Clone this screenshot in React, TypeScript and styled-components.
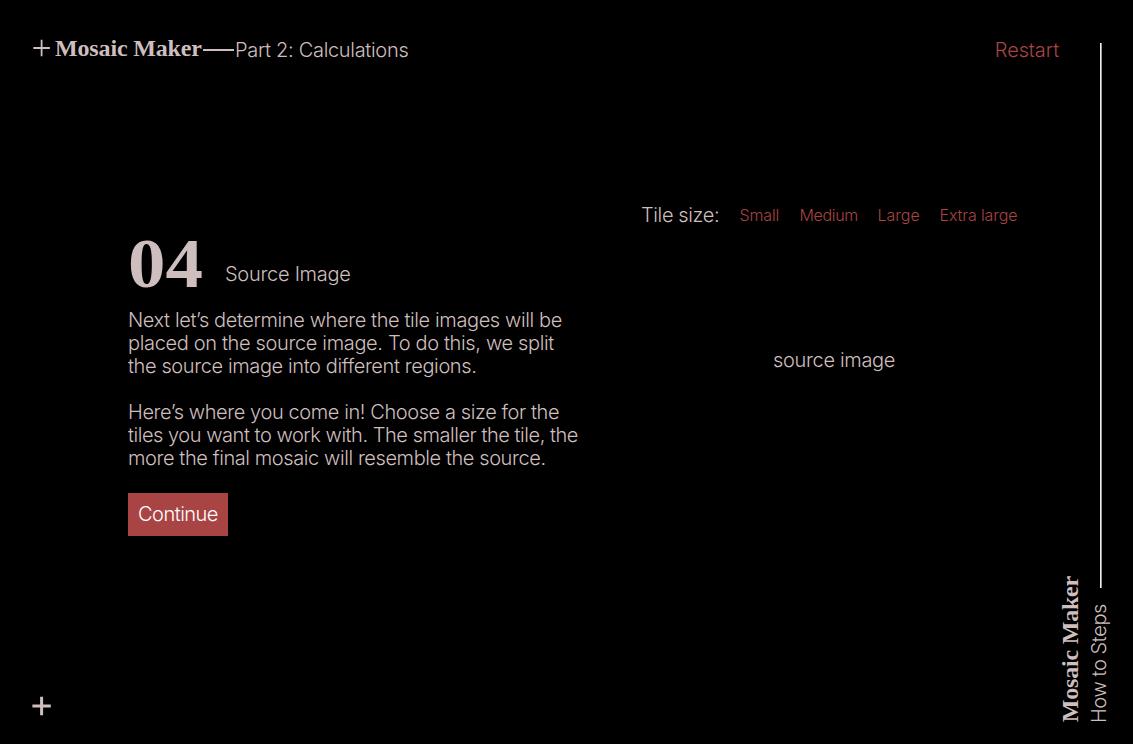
import React from "react";
import styled, { createGlobalStyle } from "styled-components";

const GlobalStyle = createGlobalStyle`
  * { box-sizing: border-box; }
  body { margin: 0; background: #000; overflow: hidden; }
`;

const sans = `Inter, "Liberation Sans", sans-serif`;
const serif = `"Liberation Serif", serif`;
const blush = "#cebebe";
const red = "#a84444";

const Page = styled.div`
  display: flex;
  width: 1133px;
  height: 744px;
  background: #000;
  color: ${blush};
  font-family: ${sans};
  font-weight: 300;
  font-size: 20px;
  line-height: 23px;
`;

const Main = styled.main`
  display: flex;
  flex-direction: column;
  width: 1059px;
  padding: 36px 0 28px 32px;
`;

const Header = styled.header`
  display: flex;
  align-items: center;
  height: 24px;
`;

const Brand = styled.h1`
  margin: 0 0 0 4px;
  width: 148px;
  font: bold 24px/24px ${serif};
  letter-spacing: -0.15px;
  white-space: nowrap;
`;

const Dash = styled.span`
  width: 31px;
  height: 2px;
  margin: 3px 1px 0 0;
  background: ${blush};
`;

const Label = styled.span<{ $track?: number }>`
  letter-spacing: ${(p) => p.$track ?? 0}px;
  white-space: nowrap;
`;

const Part = styled(Label)`
  padding-top: 5px;
`;

const Restart = styled.a<{ $track?: number }>`
  margin-left: auto;
  padding-top: 5px;
  color: ${red};
  letter-spacing: ${(p) => p.$track ?? 0}px;
`;

const Content = styled.section`
  display: flex;
  flex: 1;
  padding: 144px 0 0 96px;
`;

const Copy = styled.div`
  width: 513px;
  padding-top: 27px;
`;

const StepHeading = styled.div`
  display: flex;
  align-items: flex-end;
  height: 59px;
`;

const StepNumber = styled.span`
  width: 97px;
  margin-bottom: -9px;
  font: bold 70px/70px ${serif};
  transform: scaleX(1.07);
  transform-origin: left;
`;

const StepTitle = styled(Label)`
  padding-bottom: 4px;
`;

const Paragraph = styled.p`
  display: flex;
  flex-direction: column;
  margin: 19px 0 23px;
  & + & { margin-top: 0; }
`;

const Continue = styled.button<{ $track?: number }>`
  width: 100px;
  height: 43px;
  padding: 0 0 0 10px;
  border: 0;
  background: ${red};
  color: #fff;
  font: 300 20px/23px ${sans};
  letter-spacing: ${(p) => p.$track ?? 0}px;
  text-align: left;
  white-space: nowrap;
`;

const Preview = styled.div`
  display: flex;
  flex-direction: column;
  width: 385px;
`;

const Sizes = styled.div`
  display: flex;
  align-items: center;
  height: 23px;
`;

const SizesLabel = styled(Label)`
  width: 98.5px;
`;

const SizeOption = styled.a<{ $width: number; $track: number }>`
  width: ${(p) => p.$width}px;
  color: ${red};
  font-size: 16px;
  letter-spacing: ${(p) => p.$track}px;
  white-space: nowrap;
`;

const SourceCaption = styled(Label)`
  margin: 122px 0 0 132px;
`;

const Aside = styled.aside`
  display: flex;
  align-items: flex-end;
  width: 74px;
  padding: 43px 0 21px;
`;

const SideBrand = styled.span`
  width: 24px;
  margin: 0 0 1px -1px;
  font: bold 24px/24px ${serif};
  letter-spacing: -0.2px;
  writing-mode: vertical-rl;
  transform: rotate(180deg);
  white-space: nowrap;
`;

const SideColumn = styled.div`
  display: flex;
  flex-direction: column;
  align-items: center;
  justify-content: space-between;
  width: 25px;
  height: 680px;
  margin-left: 5px;
`;

const Rule = styled.span`
  width: 2px;
  height: 545px;
  margin-left: 3px;
  background: linear-gradient(90deg, #f0f0f0 50%, #999 50%);
`;

const SideNote = styled(Label)`
  writing-mode: vertical-rl;
  transform: rotate(180deg);
`;

const PlusMark = ({ weight, reach }: { weight: number; reach: number }) => (
  <svg width="19" height="20" viewBox="0 0 19 20" fill="none" stroke={blush} strokeWidth={weight}>
    <path d={`M${9.6 - reach} 10h${reach * 2}M9.6 ${10 - reach}v${reach * 2}`} />
  </svg>
);

const first: [string, number][] = [
  ["Next let’s determine where the tile images will be", -0.39],
  ["placed on the source image. To do this, we split", -0.345],
  ["the source image into different regions.", -0.385],
];

const second: [string, number][] = [
  ["Here’s where you come in! Choose a size for the", -0.405],
  ["tiles you want to work with. The smaller the tile, the", -0.46],
  ["more the final mosaic will resemble the source.", -0.41],
];

const sizes = [
  { name: "Small", width: 60, track: -0.15 },
  { name: "Medium", width: 78, track: -0.35 },
  { name: "Large", width: 62, track: 0 },
  { name: "Extra large", width: 80, track: -0.1 },
];

const Lines = ({ lines }: { lines: [string, number][] }) => (
  <Paragraph>
    {lines.map(([text, track]) => (
      <Label key={text} $track={track}>{text}</Label>
    ))}
  </Paragraph>
);

export default function App() {
  return (
    <Page>
      <GlobalStyle />
      <Main>
        <Header>
          <PlusMark weight={1.8} reach={8.3} />
          <Brand>Mosaic Maker</Brand>
          <Dash />
          <Part $track={-0.31}>Part 2: Calculations</Part>
          <Restart $track={-0.1}>Restart</Restart>
        </Header>
        <Content>
          <Copy>
            <StepHeading>
              <StepNumber>04</StepNumber>
              <StepTitle $track={-0.27}>Source Image</StepTitle>
            </StepHeading>
            <Lines lines={first} />
            <Lines lines={second} />
            <Continue $track={-0.5}>Continue</Continue>
          </Copy>
          <Preview>
            <Sizes>
              <SizesLabel $track={-0.38}>Tile size:</SizesLabel>
              {sizes.map((s) => (
                <SizeOption key={s.name} $width={s.width} $track={s.track}>{s.name}</SizeOption>
              ))}
            </Sizes>
            <SourceCaption $track={-0.32}>source image</SourceCaption>
          </Preview>
        </Content>
        <PlusMark weight={3} reach={9.2} />
      </Main>
      <Aside>
        <SideBrand>Mosaic Maker</SideBrand>
        <SideColumn>
          <Rule />
          <SideNote $track={-0.4}>How to Steps</SideNote>
        </SideColumn>
      </Aside>
    </Page>
  );
}
